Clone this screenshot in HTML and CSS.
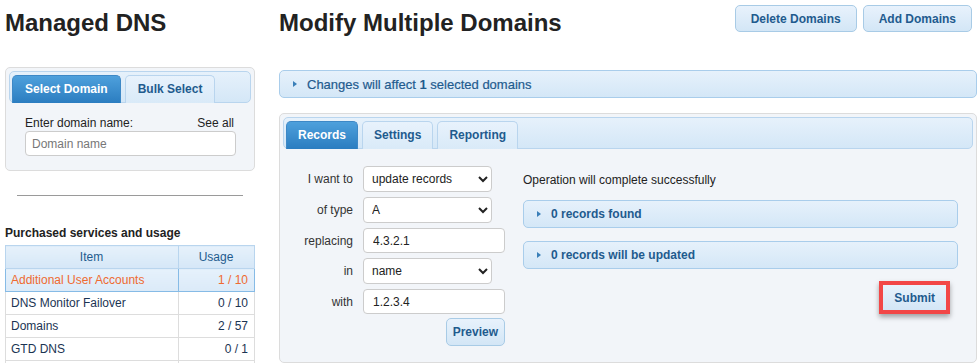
FILE: index.html
```html
<!DOCTYPE html>
<html>
<head>
    <title>Managed DNS</title>
    <link rel="stylesheet" href="styles.css">
</head>
<body>
<div class="page">
    <div class="sidebar">
        <h1>Managed DNS</h1>

        <div class="box">
            <div class="tab-nav">
                <span class="tab active">Select Domain</span>
                <span class="tab">Bulk Select</span>
            </div>
            <div class="box-body">
                <div class="field-row">
                    <span>Enter domain name:</span>
                    <span>See all</span>
                </div>
                <input class="text-input wide" type="text" placeholder="Domain name">
            </div>
        </div>

        <hr class="divider">

        <div class="usage-title">Purchased services and usage</div>
        <table class="usage">
            <thead>
                <tr><th>Item</th><th class="num-col">Usage</th></tr>
            </thead>
            <tbody>
                <tr class="hl"><td>Additional User Accounts</td><td class="num">1 / 10</td></tr>
                <tr><td>DNS Monitor Failover</td><td class="num">0 / 10</td></tr>
                <tr><td>Domains</td><td class="num">2 / 57</td></tr>
                <tr><td>GTD DNS</td><td class="num">0 / 1</td></tr>
                <tr><td>&nbsp;</td><td class="num"></td></tr>
            </tbody>
        </table>
    </div>

    <div class="main">
        <div class="main-head">
            <h1>Modify Multiple Domains</h1>
            <div class="actions">
                <button class="btn">Delete Domains</button>
                <button class="btn">Add Domains</button>
            </div>
        </div>

        <div class="accordion top-acc">
            <span class="arrow"></span>
            <span>Changes will affect <b>1</b> selected domains</span>
        </div>

        <div class="panel">
            <div class="tab-nav">
                <span class="tab active">Records</span>
                <span class="tab">Settings</span>
                <span class="tab">Reporting</span>
            </div>
            <div class="panel-body">
                <div class="form">
                    <label>I want to</label>
                    <select class="select">
                        <option>update records</option>
                    </select>
                    <label>of type</label>
                    <select class="select">
                        <option>A</option>
                    </select>
                    <label>replacing</label>
                    <input class="text-input" type="text" value="4.3.2.1">
                    <label>in</label>
                    <select class="select">
                        <option>name</option>
                    </select>
                    <label>with</label>
                    <input class="text-input" type="text" value="1.2.3.4">
                    <span></span>
                    <div class="preview-row"><button class="btn small">Preview</button></div>
                </div>

                <div class="result">
                    <div class="status">Operation will complete successfully</div>
                    <div class="accordion">
                        <span class="arrow"></span>
                        <span>0 records found</span>
                    </div>
                    <div class="accordion">
                        <span class="arrow"></span>
                        <span>0 records will be updated</span>
                    </div>
                    <div class="submit-row">
                        <span class="marker"><button class="btn small">Submit</button></span>
                    </div>
                </div>
            </div>
        </div>
    </div>
</div>
</body>
</html>
```

FILE: styles.css
```css
body {
    margin: 0;
    font-family: "Liberation Sans", Arial, sans-serif;
    font-size: 12px;
    color: #222;
    background: #fff;
}
.page {
    display: flex;
    align-items: flex-start;
}
h1 {
    margin: 8px 0 0;
    font-size: 24px;
    line-height: 30px;
    font-weight: bold;
    color: #222;
}

/* left column */
.sidebar {
    width: 250px;
    margin-left: 5px;
}
.box {
    margin-top: 29px;
    border: 1px solid #dcdcdc;
    border-radius: 5px;
    background: #f2f5f9;
    padding: 3px;
}
.tab-nav {
    display: flex;
    gap: 4px;
    padding: 3px 2px 0;
    border: 1px solid #b9d5ee;
    border-radius: 5px;
    background: linear-gradient(#e6f1fb, #d4e7f7);
}
.tab {
    height: 27px;
    line-height: 27px;
    padding: 0 12px;
    margin-bottom: -1px;
    border: 1px solid #b9d5ee;
    border-bottom: none;
    border-radius: 5px 5px 0 0;
    background: linear-gradient(#e8f2fc, #d9eaf8);
    color: #1f5b8e;
    font-weight: bold;
}
.tab.active {
    background: linear-gradient(#4ea0dc, #2b7dc0);
    border-color: #3d88c6;
    color: #fff;
}
.box-body {
    padding: 13px 17px 11px 16px;
}
.field-row {
    display: flex;
    justify-content: space-between;
    line-height: 14px;
    color: #222;
}
.text-input {
    box-sizing: border-box;
    height: 25px;
    width: 142px;
    padding: 0 9px;
    border: 1px solid #ccc;
    border-radius: 4px;
    background: #fff;
    font-family: inherit;
    font-size: 12px;
    color: #222;
}
.text-input.wide {
    width: 211px;
    margin-top: 1px;
    padding: 0 6px;
}
.text-input::placeholder {
    color: #777;
}
.divider {
    margin: 24px 12px 0;
    border: none;
    border-top: 1px solid #9a9a9a;
}
.usage-title {
    margin-top: 29px;
    line-height: 16px;
    font-weight: bold;
    color: #222;
}
.usage {
    margin-top: 4px;
    width: 250px;
    border-collapse: collapse;
}
.usage th,
.usage td {
    height: 22px;
    padding: 0 6px 0 5px;
    border: 1px solid #dddddd;
    font-size: 12px;
}
.usage th {
    background: linear-gradient(#e6f1fb, #d5e7f7);
    border-color: #b9d5ee;
    color: #1f5b8e;
    font-weight: normal;
    text-align: center;
}
.usage th.num-col {
    width: 64px;
}
.usage td {
    color: #1b3453;
}
.usage td.num {
    text-align: right;
}
.usage tr.hl td {
    background: linear-gradient(#e6f1fb, #dbeaf8);
    border-color: #86bbe6;
    color: #ef6a30;
}

/* main column */
.main {
    width: 698px;
    margin-left: 24px;
}
.main-head {
    display: flex;
    justify-content: space-between;
    align-items: flex-start;
}
.actions {
    display: flex;
    gap: 6px;
    margin-top: 5px;
    margin-right: 5px;
}
.btn {
    height: 27px;
    padding: 0 15px;
    border: 1px solid #a8cbe6;
    border-radius: 5px;
    background: linear-gradient(#e8f2fc, #d3e6f6);
    color: #1f5b8e;
    font-family: inherit;
    font-size: 12px;
    font-weight: bold;
    cursor: pointer;
}
.btn.small {
    height: 28px;
    padding: 0 6px;
}
.accordion {
    display: flex;
    align-items: center;
    height: 26px;
    border: 1px solid #a9cdeb;
    border-radius: 5px;
    background: linear-gradient(#e6f1fb, #d4e7f7);
    color: #1f5b8e;
    font-weight: bold;
}
.arrow {
    width: 0;
    height: 0;
    margin: 0 10px 0 13px;
    border-top: 3.5px solid transparent;
    border-bottom: 3.5px solid transparent;
    border-left: 4px solid #3a7fb8;
}
.top-acc {
    margin-top: 32px;
}
.top-acc span:last-child {
    font-size: 13px;
    font-weight: normal;
    color: #1f5b8e;
    -webkit-text-stroke: 0.2px #1f5b8e;
}
.top-acc b {
    -webkit-text-stroke: 0;
}
.panel {
    margin-top: 15px;
    border: 1px solid #dcdcdc;
    border-radius: 5px;
    background: #f2f5f9;
    padding: 3px;
}
.panel .tab {
    padding: 0 11px;
}
.panel-body {
    display: flex;
    gap: 18px;
    padding: 17px 15px 13px 16px;
}
.form {
    display: grid;
    grid-template-columns: 54px 142px;
    column-gap: 10px;
    row-gap: 5px;
    align-items: center;
}
.form label {
    text-align: right;
    color: #333;
}
.select {
    box-sizing: border-box;
    width: 129px;
    height: 26px;
    padding: 0 4px;
    border: 1px solid #ccc;
    border-radius: 4px;
    background: #fff;
    font-family: inherit;
    font-size: 12px;
    color: #222;
}
.preview-row {
    display: flex;
    justify-content: flex-end;
    margin-top: -1px;
}
.result {
    flex: 1;
}
.status {
    margin-top: 6px;
    line-height: 16px;
    color: #222;
}
.result .accordion {
    margin-top: 12px;
}
.result .accordion + .accordion {
    margin-top: 13px;
}
.submit-row {
    display: flex;
    justify-content: flex-end;
    margin-top: 12px;
    padding-right: 8px;
}
.marker {
    display: inline-flex;
    border: 4px solid #f24747;
    box-shadow: 0 3px 5px rgba(0, 0, 0, 0.35);
}
.marker .btn {
    height: 25px;
    padding: 0 11px;
    border: none;
    border-radius: 0;
}
```
